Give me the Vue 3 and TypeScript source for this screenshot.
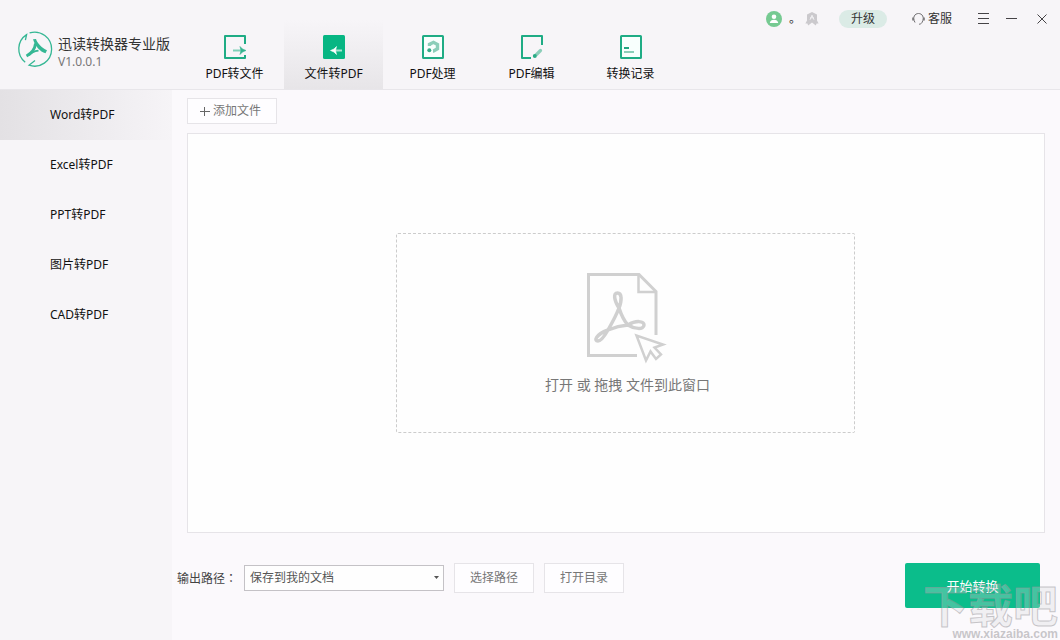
<script setup lang="ts">
import { ref } from 'vue'

interface Tab {
  id: string
  label: string
}

const tabs: Tab[] = [
  { id: 'export', label: 'PDF转文件' },
  { id: 'import', label: '文件转PDF' },
  { id: 'process', label: 'PDF处理' },
  { id: 'edit', label: 'PDF编辑' },
  { id: 'history', label: '转换记录' },
]
const modes: string[] = ['Word转PDF', 'Excel转PDF', 'PPT转PDF', '图片转PDF', 'CAD转PDF']

const activeTab = ref('import')
const activeMode = ref('Word转PDF')
const target = ref('docs')
</script>

<template>
  <div class="app">
    <header class="header">
      <div class="brand">
        <svg class="logo" width="36" height="36" viewBox="0 0 36 36" fill="none" stroke="#35b794">
          <path d="M8.2 31.2A17 17 0 0 1 9.6 3.6L8.4 9.2" stroke-width="1.3" />
          <path d="M12.6 1.9A17 17 0 1 1 12 34.2L18 29.5" stroke-width="1.3" />
          <path d="M16 8.300l3-.3c1.500 4.500 5.500 8.500 11 11.300l-1.500 3C23 20.500 18.500 16 16 8.300z" fill="#35b794" stroke="none" />
          <path d="M18.500 12.500C18 17.500 15 22 9.500 25" stroke-width="2.800" />
          <path d="M12 24.200C14.500 21 18 20 21.500 19.600" stroke-width="1.800" />
        </svg>
        <div class="names">
          <h1 class="name">迅读转换器专业版</h1>
          <span class="version">V1.0.0.1</span>
        </div>
      </div>

      <nav class="tabs">
        <button
          v-for="tab in tabs"
          :key="tab.id"
          type="button"
          class="tab"
          :class="{ active: tab.id === activeTab }"
          @click="activeTab = tab.id"
        >
          <svg width="24" height="26" viewBox="0 0 24 26" fill="none">
            <template v-if="tab.id === 'export'">
              <path d="M22 10V2H2v22h20v-3" stroke="#1fac85" stroke-width="2" stroke-linejoin="round" />
              <path d="M10 16.500h9" stroke="#7fd0b8" stroke-width="2" />
              <path d="M17 12.500q2 3 6 4-4 1-6 4l1-4z" fill="#35b48f" stroke="#35b48f" stroke-width=".6" />
            </template>
            <template v-else-if="tab.id === 'import'">
              <rect x="1" y="1" width="22" height="24" rx="1.500" fill="#07b683" />
              <path d="M12 16.500h8" stroke="#a5e5d1" stroke-width="2" />
              <path d="M14.500 12.500q-2 3-6 4 4 1 6 4l-1-4z" fill="#fff" stroke="#fff" stroke-width=".6" />
            </template>
            <template v-else-if="tab.id === 'process'">
              <rect x="2" y="2" width="20" height="22" rx=".5" fill="#f8fffd" stroke="#1fac85" stroke-width="2" />
              <path d="M8.500 12V10.300L12.500 8.300l4 2.200v4.300l-4 2.200h-.5" stroke="#8bceb9" stroke-width="3.400" />
              <circle cx="8.300" cy="16.300" r="2" fill="#35ad89" />
            </template>
            <template v-else-if="tab.id === 'edit'">
              <path d="M11 24H2V2h20v9" stroke="#1fac85" stroke-width="2" stroke-linejoin="round" />
              <path d="M20.500 16.500l-4 4" stroke="#8bceb9" stroke-width="3.200" stroke-linecap="round" />
              <circle cx="14.800" cy="22" r="2" fill="#2bac86" />
            </template>
            <template v-else>
              <rect x="2" y="2" width="20" height="22" rx=".5" fill="#f8fffd" stroke="#1fac85" stroke-width="2" />
              <path d="M5 14h5" stroke="#24a681" stroke-width="2" />
              <path d="M5 18h10" stroke="#8bceb9" stroke-width="2" />
            </template>
          </svg>
          <span>{{ tab.label }}</span>
        </button>
      </nav>

      <div class="tools">
        <button type="button" class="icon-button account" aria-label="账户">
          <svg width="16" height="16" viewBox="0 0 16 16">
            <circle cx="8" cy="8" r="8" fill="#76ca92" />
            <circle cx="8" cy="5.700" r="2.300" fill="#fff" />
            <path d="M3.800 12c0-4.500 8.400-4.500 8.400 0z" fill="#fff" />
          </svg>
        </button>
        <span class="user">。</span>
        <svg class="medal" width="14" height="14" viewBox="0 0 14 14">
          <path d="M7 0l5 2.400v6l1.600 3-2 .2-.8 2L7 10.500l-3.800 3.100-.8-2-2-.2 1.600-3v-6z" fill="#cbc9cd" />
          <path d="M5 7.800L7 3.200l2 4.600M5.200 5.800h3.600" fill="none" stroke="#f1f0f3" stroke-width="1" />
        </svg>
        <button type="button" class="upgrade">升级</button>
        <button type="button" class="service">
          <svg width="13" height="14" viewBox="0 0 13 14" fill="none" stroke="#6f6d70">
            <path d="M3 10.500C0 5 3 1.500 6.500 1.500s6.500 3.500 3.500 9" />
            <path d="M1 5.500v3M12 5.500v3" stroke-width="1.500" />
            <path d="M10 10.500c-.8 1.300-1.800 1.700-3 1.700" />
          </svg>
          <span>客服</span>
        </button>
        <button type="button" class="icon-button menu" aria-label="菜单">
          <svg width="12" height="12" viewBox="0 0 12 12" stroke="#454346"><path d="M0 .5h11M0 5.500h11M0 10.500h11" /></svg>
        </button>
        <button type="button" class="icon-button minimize" aria-label="最小化">
          <svg width="12" height="12" viewBox="0 0 12 12" stroke="#454346"><path d="M0 5.500h11" /></svg>
        </button>
        <button type="button" class="icon-button" aria-label="关闭">
          <svg width="10" height="10" viewBox="0 0 10 10" stroke="#454346"><path d="M.5.5l9 9M9.500.5l-9 9" /></svg>
        </button>
      </div>
    </header>

    <div class="body">
      <nav class="sidebar">
        <button
          v-for="mode in modes"
          :key="mode"
          type="button"
          class="mode"
          :class="{ active: mode === activeMode }"
          @click="activeMode = mode"
        >
          {{ mode }}
        </button>
      </nav>

      <main class="main">
        <button type="button" class="outlined add">
          <svg width="10" height="10" viewBox="0 0 10 10" stroke="#666"><path d="M0 5.500h10M4.500 1v9" /></svg>
          <span>添加文件</span>
        </button>

        <section class="panel">
          <button type="button" class="dropzone">
            <svg width="84" height="92" viewBox="0 0 84 92" fill="none" stroke="#d0d0d0" stroke-width="3">
              <path d="M51 83.500H2.500v-81h50.500l17 17V63" />
              <path d="M52.500 2.500v17.500h17.500" stroke-width="2.500" />
              <path
                d="M33 36C28 28 27 21 31.500 21S36 28 33 36C30 44 26 51 22 58 18 65 15 69 12 69 8 69 9 63 22 58 28 55.500 36 53.500 42 53 50 48 58 49 58 53 58 58 48 57 42 53 38 49 35 42 33 36z"
                stroke-width="3.500"
                stroke-linejoin="round"
              />
              <path d="M50.500 63.500l9.500 25 4.500-9 5.500 7.500 5-4.500-6.500-7 8.500-3z" stroke-width="2.500" />
            </svg>
            <span>打开 或 拖拽 文件到此窗口</span>
          </button>
        </section>

        <footer class="footer">
          <label class="path-label" for="target">输出路径<span class="colon">：</span></label>
          <div class="select-box">
            <select id="target" v-model="target">
              <option value="docs">保存到我的文档</option>
              <option value="source">保存到原文件夹</option>
            </select>
            <svg class="caret" width="5" height="3" viewBox="0 0 5 3"><path d="M0 0h5L2.500 3z" fill="#555" /></svg>
          </div>
          <button type="button" class="outlined path-button">选择路径</button>
          <button type="button" class="outlined path-button">打开目录</button>
          <button type="button" class="start">开始转换</button>
        </footer>
      </main>
    </div>

    <div class="watermark">
      <span class="mark">下载吧</span>
      <span class="site">www.xiazaiba.com</span>
    </div>
  </div>
</template>

<style>
body {
  margin: 0;
}
</style>

<style scoped>
.app {
  position: relative;
  display: flex;
  flex-direction: column;
  min-height: 100vh;
  overflow: hidden;
  background: #fbf9fc;
  color: #111;
  font-family: 'Noto Sans', 'Noto Sans CJK SC', sans-serif;
  font-size: 12px;
  line-height: 18px;
}

.app *,
.app {
  box-sizing: border-box;
}

button,
select {
  margin: 0;
  padding: 0;
  border: 0;
  background: none;
  color: inherit;
  font: inherit;
  cursor: pointer;
}

svg {
  display: block;
  flex: none;
}

.header {
  display: flex;
  height: 90px;
  border-bottom: 1px solid #e8e6ea;
  background: #f7f5f8;
}

.brand {
  display: flex;
  align-items: flex-start;
  gap: 5px;
  width: 185px;
  padding: 31px 0 0 17px;
}

.names {
  padding-top: 4px;
  white-space: nowrap;
}

.name {
  margin: 0;
  color: #333;
  font-size: 14px;
  font-weight: 400;
  line-height: 18px;
}

.version {
  display: block;
  color: #777;
  line-height: 18px;
}

.tabs {
  display: flex;
}

.tab {
  display: flex;
  flex-direction: column;
  align-items: center;
  gap: 5px;
  width: 99px;
  padding-top: 34px;
}

.tab.active {
  background: linear-gradient(#f7f5f8 20px, #e7e5e8);
}

.tools {
  display: flex;
  align-items: center;
  height: 38px;
  margin-left: auto;
  padding-right: 13px;
  color: #333;
}

.user {
  width: 12px;
  margin: 0 4px 0 7px;
}

.upgrade {
  width: 48px;
  height: 18px;
  margin: 0 25px 0 20px;
  border-radius: 9px;
  background: #dbebe6;
}

.service {
  display: flex;
  align-items: center;
  gap: 3px;
  margin-right: 26px;
}

.menu {
  margin-right: 16px;
}

.minimize {
  margin-right: 19px;
}

.body {
  display: flex;
  flex: 1;
}

.sidebar {
  display: flex;
  flex-direction: column;
  width: 172px;
  background: #f7f5f8;
}

.mode {
  height: 50px;
  padding-left: 50px;
  text-align: left;
}

.mode.active {
  background: linear-gradient(to right, #e3e1e4, #f6f4f7);
}

.main {
  display: flex;
  flex: 1;
  flex-direction: column;
  align-items: flex-start;
  padding: 8px 15px 32px;
}

.outlined {
  border: 1px solid #e6e4e8;
  background: #fefdff;
  color: #777;
}

.add {
  display: flex;
  align-items: center;
  gap: 3px;
  width: 90px;
  height: 26px;
  padding-left: 12px;
}

.panel {
  display: flex;
  flex: 1;
  align-items: center;
  align-self: stretch;
  justify-content: center;
  margin-top: 9px;
  padding-left: 19px;
  border: 1px solid #e6e4e8;
  background: #fefefe;
}

.dropzone {
  display: flex;
  flex-direction: column;
  align-items: center;
  gap: 10px;
  width: 459px;
  height: 200px;
  padding: 38px 0 0 4px;
  border: 1px dashed #ccc;
  border-radius: 2px;
  color: #777;
  font-size: 14px;
  line-height: 22px;
}

.footer {
  display: flex;
  align-items: flex-start;
  align-self: stretch;
  gap: 10px;
  margin: 30px 5px 0 -10px;
}

.path-label {
  width: 57px;
  color: #444;
  line-height: 30px;
  white-space: nowrap;
}

.colon {
  font-family: 'Noto Sans CJK TC', sans-serif;
}

.select-box {
  position: relative;
  width: 200px;
  padding-top: 2px;
}

.select-box select {
  width: 100%;
  height: 26px;
  padding: 0 20px 0 5px;
  border: 1px solid #c4c2c6;
  border-radius: 0;
  background: #fefefe;
  color: #555;
  appearance: none;
}

.caret {
  position: absolute;
  top: 13px;
  right: 5px;
  pointer-events: none;
}

.path-button {
  width: 80px;
  height: 30px;
}

.start {
  width: 135px;
  height: 45px;
  margin-left: auto;
  border-radius: 2px;
  background: #0bbd8b;
  color: #fff;
  font-size: 13px;
}

.watermark {
  position: absolute;
  right: 2px;
  bottom: 0;
  display: flex;
  flex-direction: column;
  align-items: flex-end;
  pointer-events: none;
}

.mark {
  color: rgba(215, 215, 218, 0.3);
  font-size: 45px;
  font-weight: 700;
  line-height: 44px;
  -webkit-text-stroke: 1px rgba(150, 148, 153, 0.5);
}

.site {
  color: rgba(190, 188, 192, 0.85);
  font-family: 'Liberation Sans', sans-serif;
  font-size: 12px;
  font-weight: 700;
  line-height: 12px;
}
</style>
